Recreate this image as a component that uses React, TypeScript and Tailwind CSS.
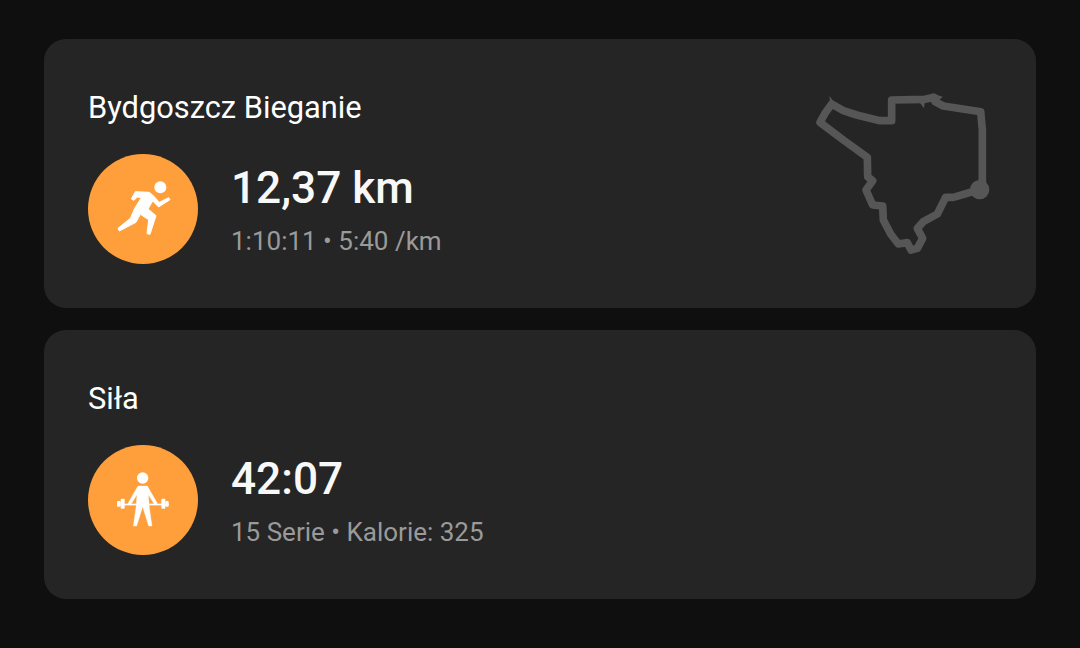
function RunnerIcon() {
  return (
    <svg viewBox="-72 -63 330 330" className="size-[110px]">
      <circle cx="145" cy="37" r="18" fill="#fff" />
      <path
        d="M58 72 L70 50 L112 52 L122 60 L142 82 L170 68 L174 74 L140 96 L122 78 L108 102 L132 122 L114 178 L105 176 L110 134 L85 118 L72 142 L22 168 L18 160 L55 130 L68 100 L88 68 L76 66 L66 76 Z"
        fill="#fff"
        stroke="#fff"
        strokeWidth="3"
        strokeLinejoin="round"
      />
    </svg>
  )
}

function LifterIcon() {
  return (
    <svg viewBox="-72 -63 330 330" className="size-[110px]">
      <circle cx="92" cy="36" r="17" fill="#fff" />
      <path
        d="M78 60 H106 L136 112 L129 118 L109 86 L112 125 L120 180 H110 L92 122 L74 180 H64 L72 125 L75 86 L55 118 L48 112 Z"
        fill="#fff"
        stroke="#fff"
        strokeWidth="1"
        strokeLinejoin="round"
      />
      <rect x="15" y="113" width="155" height="5" fill="#fff" />
      <rect x="26" y="98" width="12" height="30" rx="3" fill="#fff" />
      <rect x="148" y="98" width="12" height="30" rx="3" fill="#fff" />
      <rect x="15" y="105" width="11" height="17" rx="3" fill="#fff" />
      <rect x="160" y="105" width="10" height="17" rx="3" fill="#fff" />
    </svg>
  )
}

function RouteMap() {
  return (
    <svg viewBox="0 0 600 540" className="mt-[41px] mr-9 h-[180px] w-[200px] shrink-0">
      <path
        d="M95 72 L75 100 L60 127 L130 180 L202 232 L203 290 L218 302 L198 330 L218 375 L248 378 L250 420 L272 462 L295 492 L322 488 L333 510 L352 505 L368 475 L352 445 L370 425 L412 402 L437 352 L460 352 L535 330 L547 320 L547 150 L542 95 L430 78 L405 65 L402 52 L375 58 L275 60 L275 122 L240 122 L170 105 L130 92 Z"
        fill="none"
        stroke="#565656"
        strokeWidth="23"
        strokeLinejoin="round"
      />
      <path d="M88 48 L110 75 L92 80 Z M395 40 L428 50 L410 68 Z M355 62 L375 62 L372 85 Z" fill="#565656" />
      <circle cx="539" cy="329" r="29" fill="#565656" />
    </svg>
  )
}

function ActivityCard({
  title,
  value,
  details,
  icon,
  map,
}: {
  title: string
  value: string
  details: string
  icon: React.ReactNode
  map?: React.ReactNode
}) {
  return (
    <div className="flex h-[269px] items-start justify-between rounded-[22px] bg-[#252525]">
      <div className="pl-11 pt-[51px]">
        <h2 className="text-[30.8px] leading-9 text-white">{title}</h2>
        <div className="mt-[28px] flex items-center">
          <div className="flex size-[110px] items-center justify-center rounded-full bg-[#ff9f3b]">{icon}</div>
          <div className="ml-[33px]">
            <div className="text-[44.2px] leading-[52px] font-medium text-[#f8f8f8]">{value}</div>
            <div className="mt-[11px] text-[26px] leading-8 text-[#9a9a9a]">{details}</div>
          </div>
        </div>
      </div>
      {map}
    </div>
  )
}

export default function App() {
  return (
    <div className="flex h-[648px] w-[1080px] flex-col gap-[22px] overflow-hidden bg-[#0f0f0f] px-11 pt-[39px] font-['Roboto',sans-serif]">
      <ActivityCard
        title="Bydgoszcz Bieganie"
        value="12,37 km"
        details="1:10:11 • 5:40 /km"
        icon={<RunnerIcon />}
        map={<RouteMap />}
      />
      <ActivityCard title="Siła" value="42:07" details="15 Serie • Kalorie: 325" icon={<LifterIcon />} />
    </div>
  )
}
